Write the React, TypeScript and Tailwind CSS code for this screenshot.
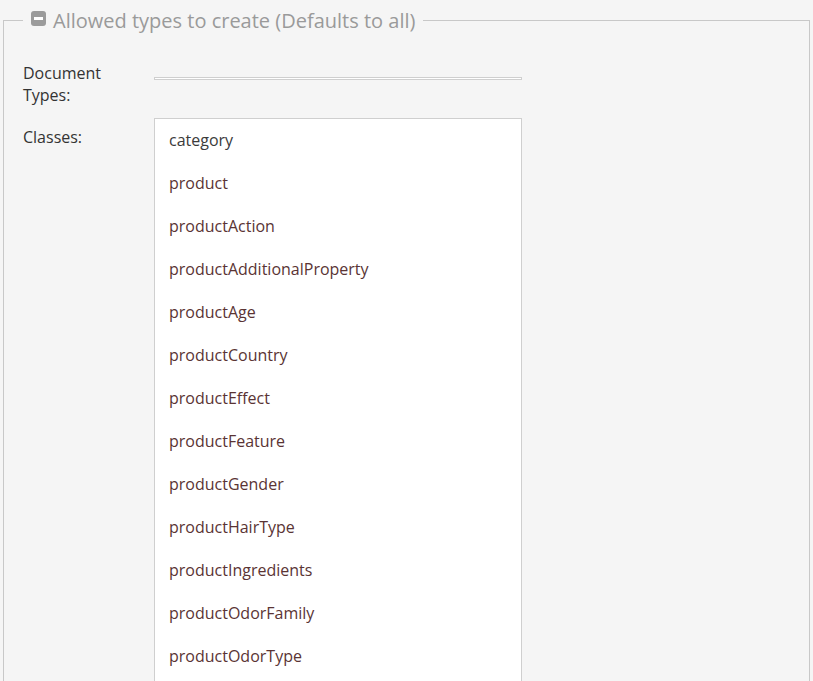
const classes = [
  "category",
  "product",
  "productAction",
  "productAdditionalProperty",
  "productAge",
  "productCountry",
  "productEffect",
  "productFeature",
  "productGender",
  "productHairType",
  "productIngredients",
  "productOdorFamily",
  "productOdorType",
  "productShape",
  "productSkinType",
];

function MinusIcon() {
  return (
    <svg width="15" height="15" viewBox="0 0 15 15" className="block">
      <rect x="0" y="0" width="15" height="15" rx="3" fill="#9b9b9b" />
      <rect x="3" y="6" width="9" height="3" fill="#ffffff" />
    </svg>
  );
}

export default function App() {
  return (
    <div
      className="min-h-screen bg-[#f5f5f5] pt-[7px] text-[16px] text-[#333]"
      style={{ fontFamily: '"Open Sans", "Liberation Sans", sans-serif' }}
    >
      <fieldset className="mx-[3px] border border-[#c8c8c8] pl-[19px] pb-6">
        <legend className="flex items-center gap-[7px] px-2">
          <span className="-mt-[4px]">
            <MinusIcon />
          </span>
          <span className="text-[20px] leading-[27px] text-[#9a9a9a]">
            Allowed types to create (Defaults to all)
          </span>
        </legend>

        {/* Document types */}
        <div className="mt-[28px] flex">
          <label className="w-[131px] leading-[22px]">
            Document
            <br />
            Types:
          </label>
          <div className="mt-[15px] h-[3px] w-[368px] border border-[#cfcfcf] bg-white" />
        </div>

        {/* Classes */}
        <div className="mt-3 flex">
          <label className="mt-[8px] w-[131px] leading-[22px]">Classes:</label>
          <ul className="w-[368px] border border-[#cfcfcf] bg-white">
            {classes.map((c, i) => (
              <li
                key={c}
                className={
                  "flex h-[43px] items-center pb-[2px] pl-[14px] leading-[22px] " +
                  (i === 0 ? "text-[#3b3b3b]" : "text-[#5a3434]")
                }
              >
                {c}
              </li>
            ))}
          </ul>
        </div>
      </fieldset>
    </div>
  );
}
